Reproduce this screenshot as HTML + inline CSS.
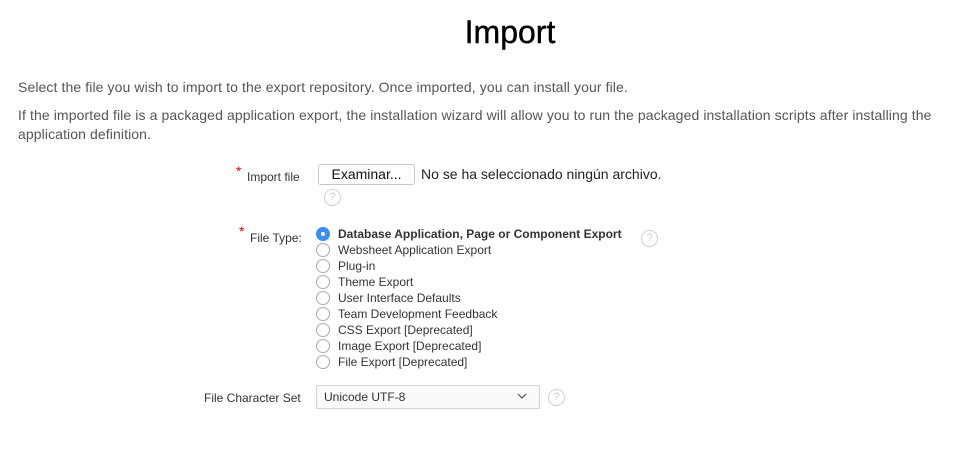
<!DOCTYPE html>
<html><head><meta charset="utf-8"><style>
body{margin:0;width:970px;height:459px;background:#fff;font-family:"Liberation Sans",Arial,sans-serif;position:relative;overflow:hidden}
.a{position:absolute;white-space:nowrap}
h1{position:absolute;left:0;width:1020px;text-align:center;top:14px;margin:0;font-size:32px;font-weight:normal;color:#000;-webkit-text-stroke:0.4px #000}
.p{font-size:14px;color:#555;letter-spacing:0.1px}
.lbl{font-size:12px;color:#333}
.req{color:#e00;font-size:14px}
.r{position:absolute;left:316px;width:12px;height:12px;border:1px solid #a9a9a9;border-radius:50%;background:#fff}
.r.on{background:#3b8ef0;border-color:#3b8ef0}
.r.on:after{content:"";position:absolute;left:4px;top:4px;width:4px;height:4px;border-radius:50%;background:#fff}
.t{position:absolute;left:338px;font-size:12px;color:#333;white-space:nowrap}
.h{position:absolute;width:15px;height:15px;border:1px solid #d0d0d0;border-radius:50%;color:#ccc;font-size:11px;text-align:center;line-height:15px}
</style></head><body>
<h1>Import</h1>
<div class="a p" style="left:18px;top:79px">Select the file you wish to import to the export repository. Once imported, you can install your file.</div>
<div class="a p" style="left:18px;top:107px">If the imported file is a packaged application export, the installation wizard will allow you to run the packaged installation scripts after installing the</div>
<div class="a p" style="left:18px;top:126px">application definition.</div>

<div class="a req" style="left:236px;top:163px">*</div>
<div class="a lbl" style="left:247px;top:170px">Import file</div>
<div class="a" style="left:318px;top:164px;width:95px;height:19px;border:1px solid #c8c8c8;border-radius:3px;font-size:14px;text-align:center;line-height:19px;color:#111;box-sizing:content-box">Examinar...</div>
<div class="a" style="left:421px;top:166px;font-size:14px;color:#222">No se ha seleccionado ningún archivo.</div>
<div class="h" style="left:324px;top:189px">?</div>

<div class="a req" style="left:239px;top:223px">*</div>
<div class="a lbl" style="left:250px;top:231px">File Type:</div>
<div class="r on" style="top:227px"></div><div class="t" style="top:227px;font-weight:bold">Database Application, Page or Component Export</div>
<div class="h" style="left:641px;top:230px">?</div>
<div class="r" style="top:243px"></div><div class="t" style="top:243px">Websheet Application Export</div>
<div class="r" style="top:259px"></div><div class="t" style="top:259px">Plug-in</div>
<div class="r" style="top:275px"></div><div class="t" style="top:275px">Theme Export</div>
<div class="r" style="top:291px"></div><div class="t" style="top:291px">User Interface Defaults</div>
<div class="r" style="top:307px"></div><div class="t" style="top:307px">Team Development Feedback</div>
<div class="r" style="top:323px"></div><div class="t" style="top:323px">CSS Export [Deprecated]</div>
<div class="r" style="top:339px"></div><div class="t" style="top:339px">Image Export [Deprecated]</div>
<div class="r" style="top:355px"></div><div class="t" style="top:355px">File Export [Deprecated]</div>

<div class="a lbl" style="left:204px;top:391px">File Character Set</div>
<div class="a" style="left:316px;top:385px;width:222px;height:22px;border:1px solid #d4d4d4;border-radius:2px;background:#fafafa"></div>
<div class="a" style="left:324px;top:390px;font-size:12px;color:#333">Unicode UTF-8</div>
<svg class="a" style="left:517px;top:393px" width="10" height="6"><path d="M1 1l4 4 4-4" fill="none" stroke="#555" stroke-width="1.2"/></svg>
<div class="h" style="left:548px;top:389px">?</div>
</body></html>
